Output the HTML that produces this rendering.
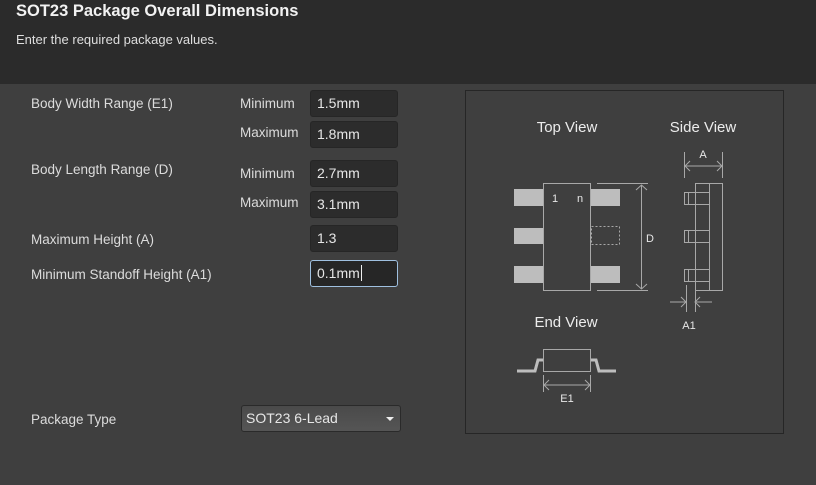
<!DOCTYPE html>
<html><head><style>
body{margin:0;width:816px;height:485px;background:#3f3f3f;font-family:"Liberation Sans",sans-serif;overflow:hidden;position:relative;color:#dcdcdc}
.hdr{position:absolute;left:0;top:0;width:816px;height:84px;background:#2b2b2b}
.t{position:absolute;white-space:nowrap;font-size:13.5px}
.in{position:absolute;left:310px;width:86px;height:25px;background:#2c2c2c;border:1px solid #262626;border-radius:3px;box-sizing:content-box}
.in span{position:absolute;left:6px;top:4px;font-size:14px;color:#e6e6e6}
</style></head><body>
<div class="hdr"></div>
<div class="t" style="left:16px;top:2px;font-size:16.5px;font-weight:bold;color:#f2f2f2">SOT23 Package Overall Dimensions</div>
<div class="t" style="left:16px;top:32px;font-size:13px;color:#dedede">Enter the required package values.</div>

<div class="t" style="left:31px;top:96px">Body Width Range (E1)</div>
<div class="t" style="left:240px;top:96px">Minimum</div>
<div class="t" style="left:240px;top:125px">Maximum</div>
<div class="t" style="left:31px;top:162px">Body Length Range (D)</div>
<div class="t" style="left:240px;top:166px">Minimum</div>
<div class="t" style="left:240px;top:195px">Maximum</div>
<div class="t" style="left:31px;top:232px">Maximum Height (A)</div>
<div class="t" style="left:31px;top:267px">Minimum Standoff Height (A1)</div>
<div class="t" style="left:31px;top:412px">Package Type</div>

<div class="in" style="top:90px"><span>1.5mm</span></div>
<div class="in" style="top:121px"><span>1.8mm</span></div>
<div class="in" style="top:160px"><span>2.7mm</span></div>
<div class="in" style="top:191px"><span>3.1mm</span></div>
<div class="in" style="top:225px"><span>1.3</span></div>
<div class="in" style="top:260px;background:#262626;border-color:#9fc0e0"><span>0.1mm<span style="position:static;border-right:1px solid #eee;margin-left:1px"></span></span></div>

<div style="position:absolute;left:241px;top:405px;width:158px;height:25px;border:1px solid #2a2a2a;border-radius:3px;background:linear-gradient(#4a4a4a,#555)">
<span style="position:absolute;left:4px;top:4px;font-size:14px;color:#e6e6e6">SOT23 6-Lead</span>
<span style="position:absolute;right:6px;top:11px;width:0;height:0;border-left:4px solid transparent;border-right:4px solid transparent;border-top:4px solid #eee"></span>
</div>

<div style="position:absolute;left:465px;top:90px;width:319px;height:344px;border:1px solid #262626;box-sizing:border-box"></div>

<svg width="816" height="485" style="position:absolute;left:0;top:0" font-family="Liberation Sans,sans-serif">
<g fill="#bdbdbd">
<rect x="514" y="189" width="29" height="17"/><rect x="514" y="228" width="29" height="16"/><rect x="514" y="266" width="29" height="17"/>
<rect x="591" y="189" width="29" height="17"/><rect x="591" y="266" width="29" height="17"/>
</g>
<g fill="none" stroke="#a8a8a8" stroke-width="1">
<rect x="543.5" y="183.5" width="47" height="107"/>
<rect x="591.5" y="226.5" width="28" height="18" stroke-dasharray="2,2"/>
<path d="M597 183.5H648M597 290.5H648M641.5 185V289M636 190l5.5-5 5.5 5M636 284l5.5 5 5.5-5"/>
<rect x="709.5" y="183.5" width="13" height="107"/>
<rect x="695.5" y="183.5" width="14" height="107"/>
<rect x="684.5" y="192.5" width="25" height="12"/><rect x="684.5" y="230.5" width="25" height="12"/><rect x="684.5" y="269.5" width="25" height="12"/>
<path d="M688.5 192.5v12M688.5 230.5v12M688.5 269.5v12"/>
<path d="M684.5 152V178M722.5 152V178M685 166H722M690 161l-5 5 5 5M717 161l5 5-5 5"/>
<path d="M686.5 285V312M695.5 285V312M670 302H686M681 297l5 5-5 5M712 302H695M700 297l-5 5 5 5"/>
<rect x="543.5" y="349.5" width="47" height="22"/>
<path d="M543.5 375V392M590.5 375V392M544 385H590M549 380l-5 5 5 5M585 380l5 5-5 5"/>
</g>
<path d="M517 371H535L538 360H543M591 360H596L599 371H616" fill="none" stroke="#bdbdbd" stroke-width="3"/>
<g fill="#e8e8e8" font-size="11" text-anchor="middle">
<text x="555" y="202">1</text><text x="580" y="202">n</text>
<text x="650" y="242">D</text><text x="703" y="158">A</text><text x="689" y="329">A1</text><text x="567" y="402">E1</text>
</g>
<g fill="#ececec" font-size="15" text-anchor="middle">
<text x="567" y="132">Top View</text><text x="703" y="132">Side View</text><text x="566" y="327">End View</text>
</g>
</svg>
</body></html>
